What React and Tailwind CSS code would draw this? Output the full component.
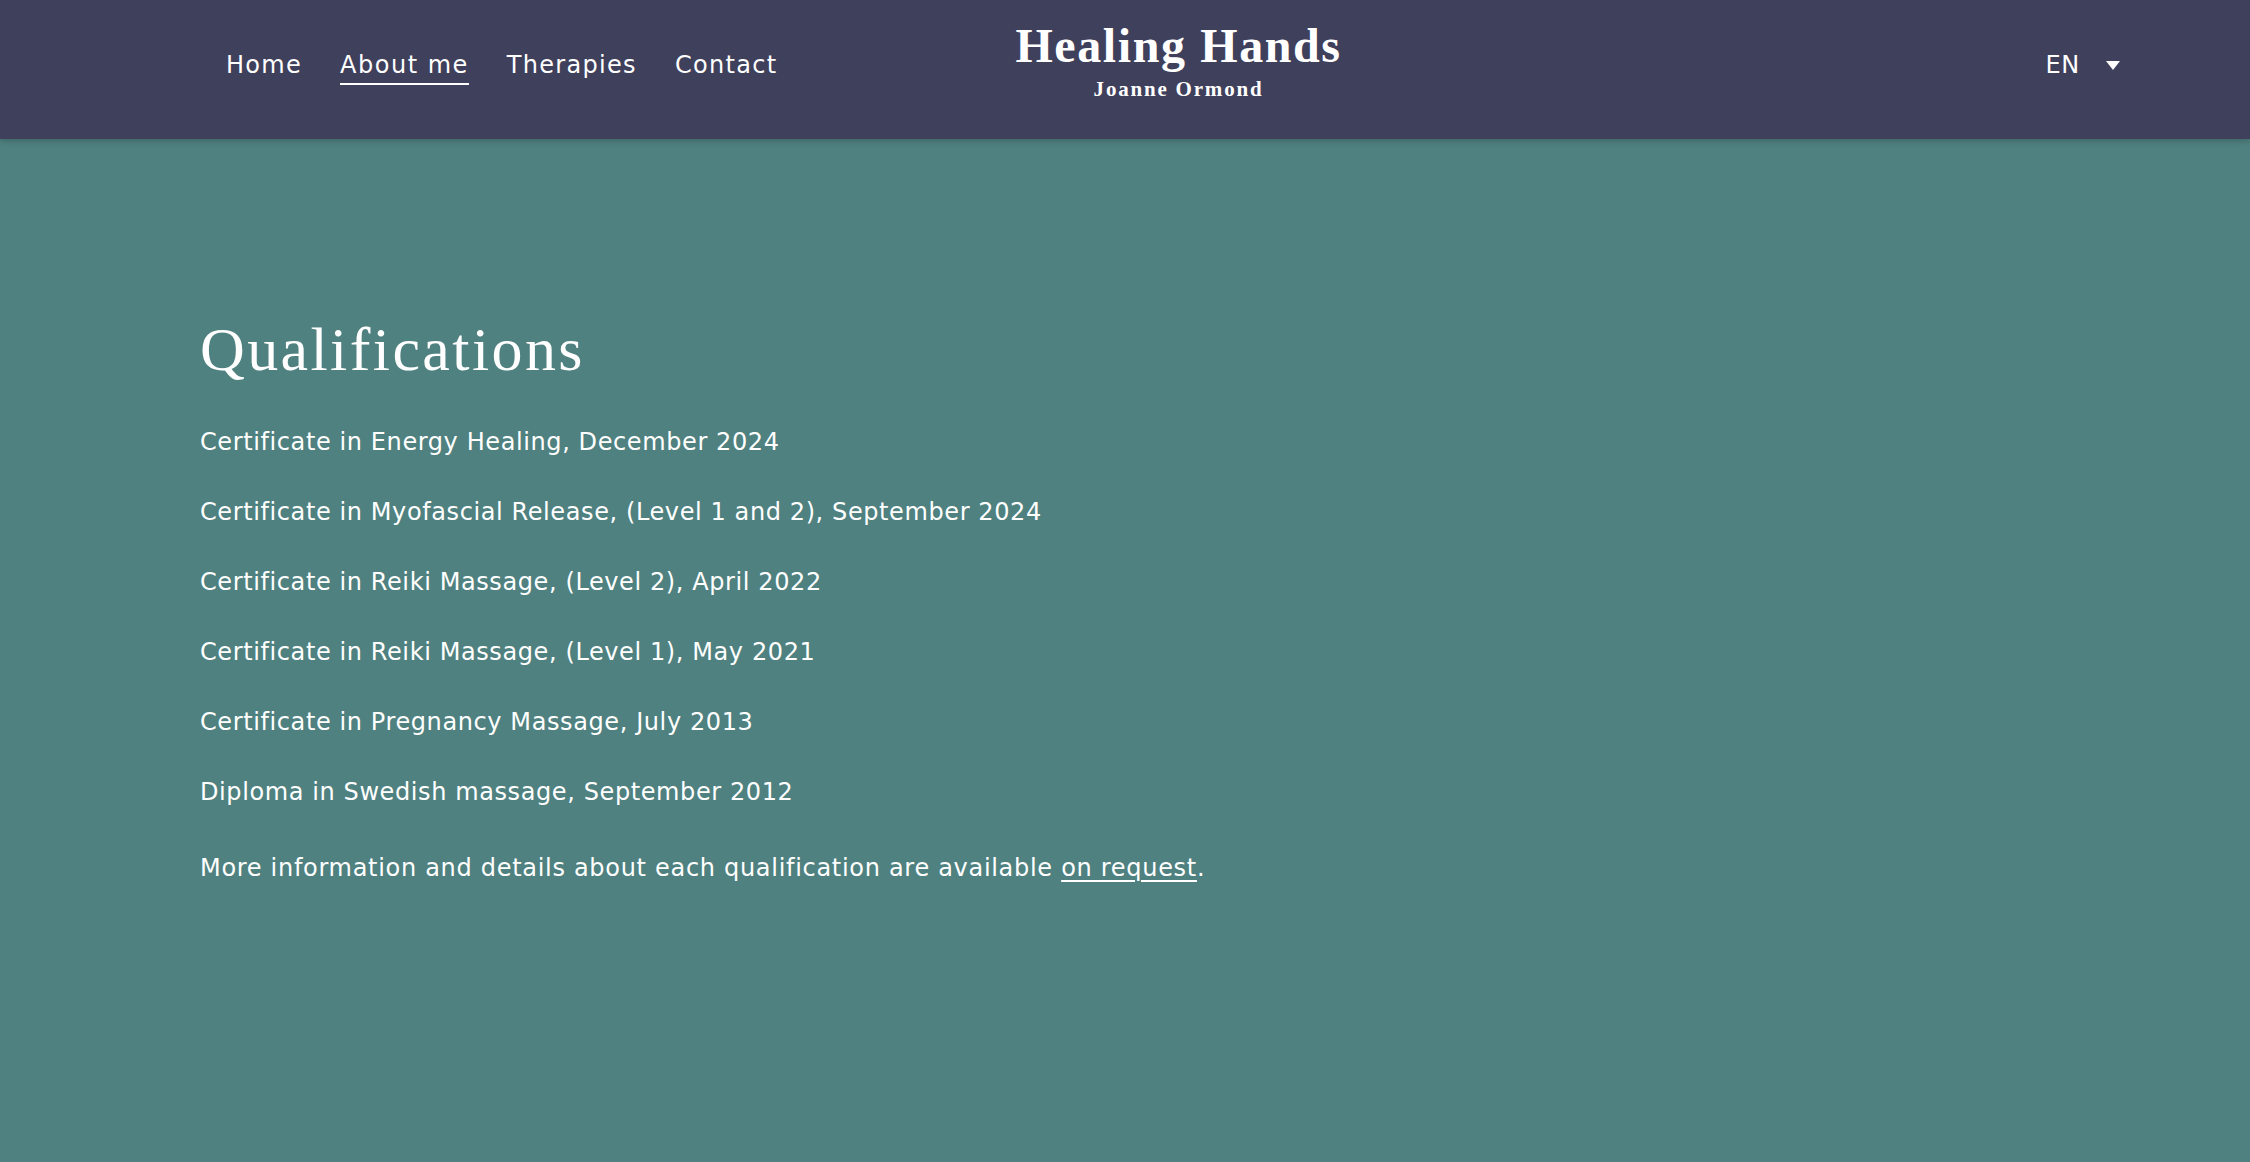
import React from "react";

const navLinks = [
  { label: "Home", active: false },
  { label: "About me", active: true },
  { label: "Therapies", active: false },
  { label: "Contact", active: false },
];

const qualifications = [
  "Certificate in Energy Healing, December 2024",
  "Certificate in Myofascial Release, (Level 1 and 2), September 2024",
  "Certificate in Reiki Massage, (Level 2), April 2022",
  "Certificate in Reiki Massage, (Level 1), May 2021",
  "Certificate in Pregnancy Massage, July 2013",
  "Diploma in Swedish massage, September 2012",
];

function Header() {
  return (
    <header className="relative z-10 grid h-[139px] grid-cols-3 bg-[#3f405c] pl-[226px] pr-[119px] shadow-[0_2px_6px_rgba(0,0,0,0.22)] font-['DejaVu_Sans',sans-serif] text-white">
      <nav className="flex items-start gap-[38px] pt-[47px]">
        {navLinks.map((link) => (
          <a
            key={link.label}
            href="#"
            className={
              link.active
                ? "border-b-2 border-white text-[24px] leading-[36px] tracking-[1.5px] whitespace-nowrap"
                : "border-b-2 border-transparent text-[24px] leading-[36px] tracking-[1.3px] whitespace-nowrap"
            }
          >
            {link.label}
          </a>
        ))}
      </nav>

      <div className="flex flex-col items-center pt-[22px] font-['Liberation_Serif',serif] font-bold">
        <div className="text-[48px] leading-[48px] tracking-[1.6px] whitespace-nowrap">Healing Hands</div>
        <div className="mt-[9px] text-[21px] leading-[21px] tracking-[1.8px] whitespace-nowrap">Joanne Ormond</div>
      </div>

      <div className="flex items-start justify-end pt-[47px]">
        <button className="flex items-center pr-[11px] text-[24px] leading-[36px] tracking-[0.7px] text-white">
          <span>EN</span>
          <svg className="ml-[26px]" width="14" height="9" viewBox="0 0 14 9" aria-hidden="true">
            <path d="M0 0 H14 L7 9 Z" fill="#ffffff" />
          </svg>
        </button>
      </div>
    </header>
  );
}

export default function App() {
  return (
    <div className="min-h-screen bg-[#4f8180] text-white">
      <Header />
      <main className="pl-[200px] pt-[179px] pb-20 font-['DejaVu_Sans',sans-serif]">
        <h2 className="font-['Liberation_Serif',serif] text-[62px] leading-[62px] tracking-[2.4px] font-normal">
          Qualifications
        </h2>
        <div className="mt-[44px] flex flex-col gap-[34px]">
          {qualifications.map((q) => (
            <p key={q} className="text-[24px] leading-[36px] tracking-[0.6px]">
              {q}
            </p>
          ))}
        </div>
        <p className="mt-[40px] text-[24px] leading-[36px] tracking-[0.7px]">
          More information and details about each qualification are available{" "}
          <a href="#" className="underline underline-offset-4 decoration-2">on request</a>.
        </p>
      </main>
    </div>
  );
}
